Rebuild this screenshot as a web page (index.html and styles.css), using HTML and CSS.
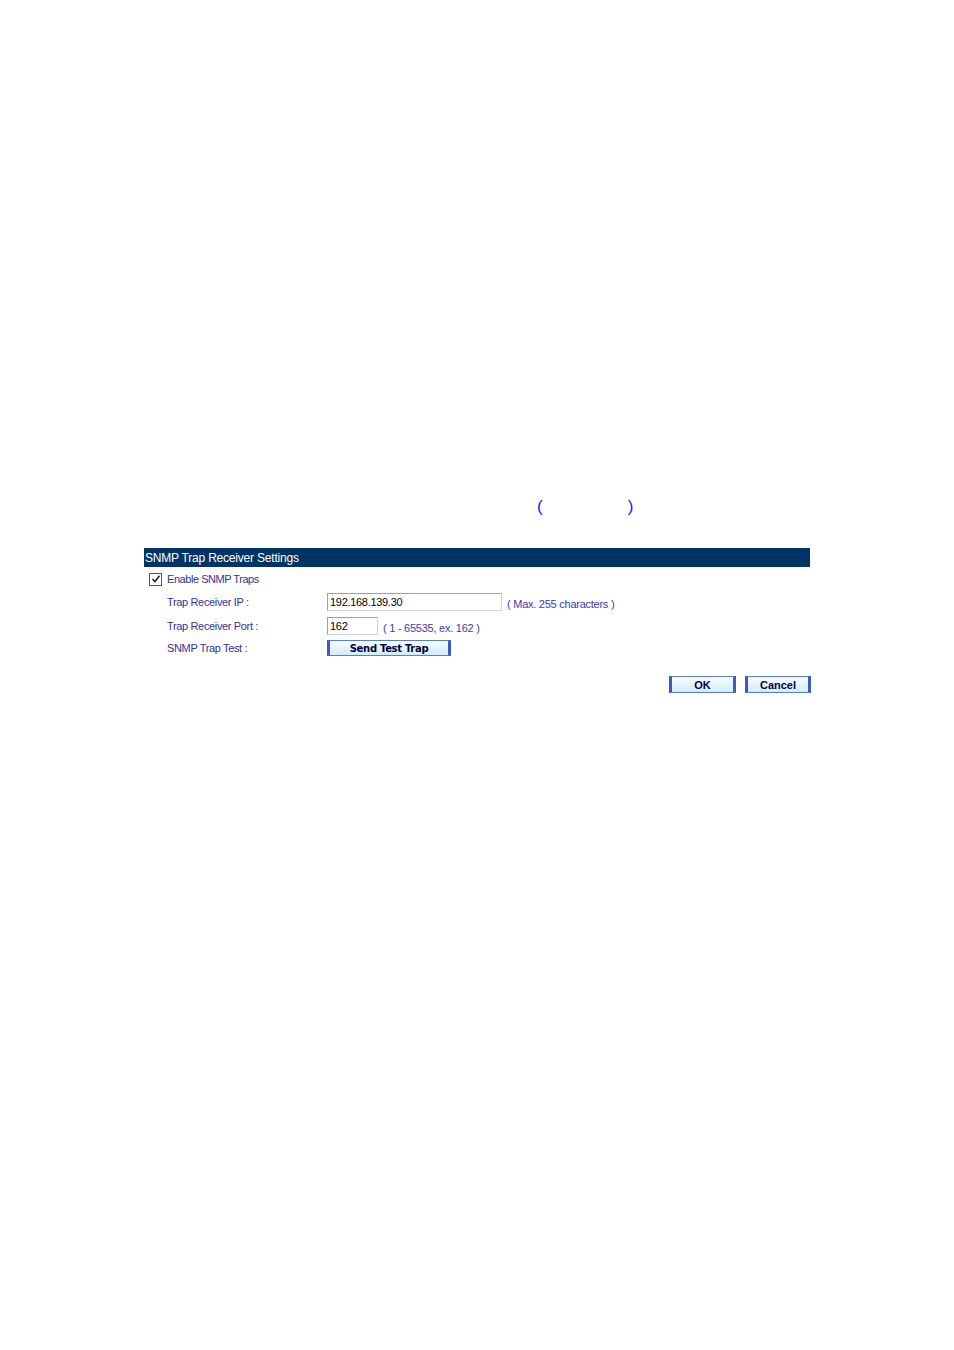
FILE: index.html
```html
<!DOCTYPE html>
<html>
<head>
<meta charset="utf-8">
<link rel="stylesheet" href="styles.css">
</head>
<body>
<div class="page">
  <div class="parens"><span>(</span><span>)</span></div>
  <div class="panel">
    <div class="header">SNMP Trap Receiver Settings</div>
    <div class="enable">
      <span class="check"><svg width="10" height="10" viewBox="0 0 10 10"><path d="M1.5 5 L4 7.5 L8.5 1.8" fill="none" stroke="#222" stroke-width="1.6"/></svg></span>
      <span class="label en">Enable SNMP Traps</span>
    </div>
    <div class="rows">
      <div class="row r1">
        <span class="label lab">Trap Receiver IP :</span>
        <span class="input wide">192.168.139.30</span>
        <span class="hint">( Max. 255 characters )</span>
      </div>
      <div class="row r2">
        <span class="label lab">Trap Receiver Port :</span>
        <span class="input narrow">162</span>
        <span class="hint">( 1 - 65535, ex. 162 )</span>
      </div>
      <div class="row r3">
        <span class="label lab">SNMP Trap Test :</span>
        <span class="btn send">Send Test Trap</span>
      </div>
    </div>
    <div class="actions">
      <span class="btn ok">OK</span>
      <span class="btn cancel">Cancel</span>
    </div>
  </div>
</div>
</body>
</html>
```

FILE: styles.css
```css
html, body {
  margin: 0;
  padding: 0;
  background: #ffffff;
}
.page {
  width: 954px;
  height: 1350px;
  font-family: "Liberation Sans", Arial, sans-serif;
}
.parens {
  padding-top: 497px;
  padding-left: 537px;
  height: 21px;
  display: flex;
  gap: 85px;
  font-size: 17px;
  color: #1a1aff;
}
.panel {
  margin-top: 30px;
  margin-left: 144px;
  width: 666px;
}
.header {
  background: #003366;
  color: #ffffff;
  font-size: 12px;
  height: 19px;
  line-height: 20px;
  padding-left: 1px;
  letter-spacing: -0.2px;
}
.label {
  color: #33339a;
  font-size: 11px;
  letter-spacing: -0.35px;
}
.en {
  letter-spacing: -0.45px;
}
.enable {
  display: flex;
  align-items: center;
  height: 12px;
  margin-top: 6px;
  padding-left: 5px;
}
.check {
  width: 11px;
  height: 11px;
  border: 1px solid #555;
  background: #fff;
  display: flex;
  align-items: center;
  justify-content: center;
  margin-right: 5px;
}
.rows {
  padding-left: 23px;
  margin-top: 8px;
}
.row {
  display: flex;
  align-items: center;
}
.lab {
  width: 160px;
}
.r1 { height: 18px; }
.r2 { height: 18px; margin-top: 6px; }
.r3 { height: 16px; margin-top: 5px; }
.input {
  box-sizing: border-box;
  height: 18px;
  border: 1px solid #a0a0a0;
  border-right-color: #d4d4d4;
  border-bottom-color: #d4d4d4;
  font-size: 11px;
  line-height: 16px;
  padding-left: 2px;
  color: #000;
  letter-spacing: -0.3px;
}
.wide { width: 175px; }
.narrow { width: 51px; }
.hint {
  color: #3a3ab8;
  font-size: 11px;
  margin-left: 5px;
  margin-top: 3px;
  letter-spacing: -0.25px;
}
.r2 .hint { margin-top: 4px; }
.btn {
  box-sizing: border-box;
  display: flex;
  align-items: center;
  justify-content: center;
  height: 16px;
  border: 1px solid #5a7cd0;
  border-left: 3px solid #3a5cc0;
  border-right: 3px solid #3a5cc0;
  background: linear-gradient(#f8fcff, #e4f4ff 50%, #d0ecff);
  color: #00003a;
  font-size: 11px;
  font-weight: bold;
}
.send {
  width: 124px;
  font-family: "DejaVu Sans", Verdana, sans-serif;
  font-size: 10px;
  letter-spacing: -0.3px;
  font-weight: 600;
}
.actions {
  display: flex;
  justify-content: flex-end;
  gap: 9px;
  margin-top: 20px;
  margin-right: -1px;
}
.ok { width: 67px; height: 17px; }
.cancel { width: 66px; height: 17px; }
```
